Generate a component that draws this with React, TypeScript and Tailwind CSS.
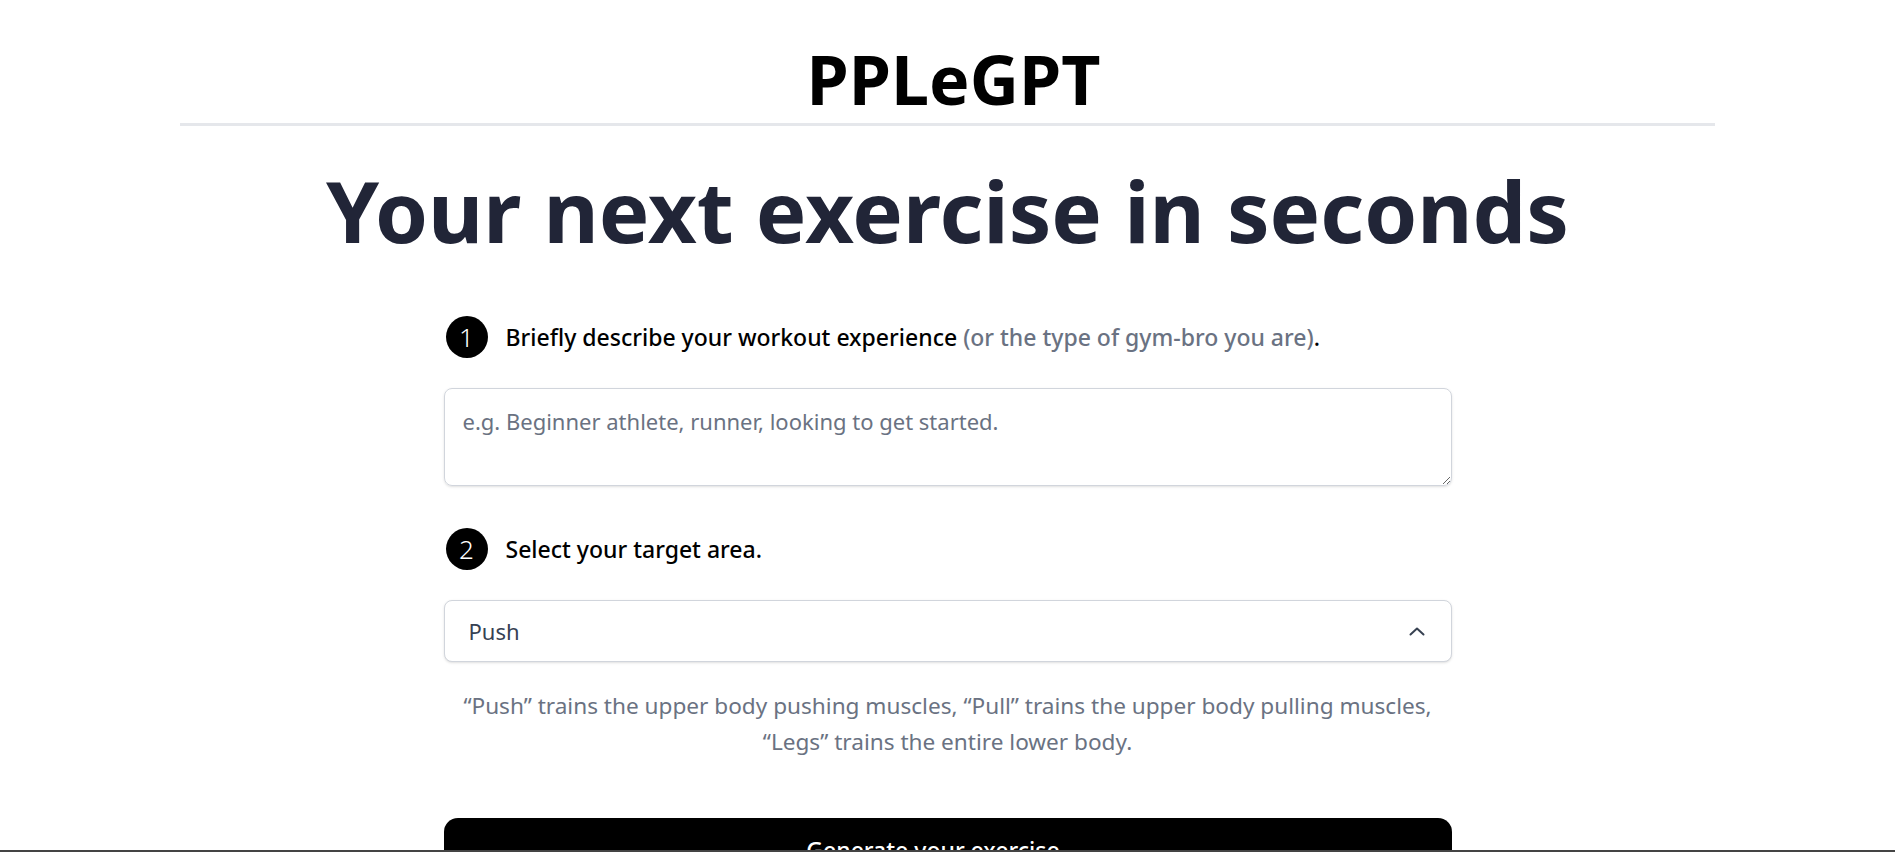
export default function App() {
  return (
    <div className="min-h-screen bg-white font-['Noto_Sans',sans-serif] flex flex-col items-center">
      <header className="w-[1535px] flex justify-center border-b-[3px] border-gray-200 pt-[45px] pb-[10px]">
        <h1 className="text-[68px] font-bold leading-none text-black pl-[12px]">PPLeGPT</h1>
      </header>

      <main className="flex flex-col items-center">
        <h2 className="mt-[42px] text-[85px] font-bold leading-none text-[#212537]">
          Your next exercise in seconds
        </h2>

        <div className="w-[1008px] mt-[63px] flex flex-col">
          {/* step 1 */}
          <div className="flex items-center gap-[18px] pl-[2px]">
            <div className="w-[42px] h-[42px] rounded-full bg-black text-white flex items-center justify-center text-[26px] leading-none font-light">
              1
            </div>
            <p className="text-[23px] font-medium text-black leading-none">
              Briefly describe your workout experience{" "}
              <span className="text-gray-500">(or the type of gym-bro you are)</span>.
            </p>
          </div>

          <textarea
            rows={2}
            placeholder="e.g. Beginner athlete, runner, looking to get started."
            className="mt-[30px] h-[98px] w-full rounded-lg border border-gray-300 shadow-sm px-[18px] py-[17px] text-[22px] leading-[30px] text-black placeholder:text-gray-500 outline-none"
          />

          {/* step 2 */}
          <div className="mt-[42px] flex items-center gap-[18px] pl-[2px]">
            <div className="w-[42px] h-[42px] rounded-full bg-black text-white flex items-center justify-center text-[26px] leading-none font-light">
              2
            </div>
            <p className="text-[23px] font-medium text-black leading-none">Select your target area.</p>
          </div>

          <button
            type="button"
            className="mt-[30px] h-[62px] w-full rounded-lg border border-gray-300 shadow-sm bg-white flex items-center justify-between pl-[24px] pr-[26px]"
          >
            <span className="text-[22px] text-gray-700 leading-none">Push</span>
            <svg width="16" height="9" viewBox="0 0 16 9" fill="none">
              <path d="M1.5 7.5 L8 1.5 L14.5 7.5" stroke="#374151" strokeWidth="2" strokeLinecap="round" strokeLinejoin="round" />
            </svg>
          </button>

          <p className="mt-[26px] text-center text-[22.6px] leading-[36px] text-gray-500">
            “Push” trains the upper body pushing muscles, “Pull” trains the upper body pulling muscles,
            <br />
            “Legs” trains the entire lower body.
          </p>

          <button
            type="button"
            className="mt-[58px] h-[64px] w-full rounded-[14px] bg-black text-white text-[23px] font-medium"
          >
            Generate your exercise →
          </button>
        </div>
      </main>

      <div className="fixed bottom-0 left-0 right-0 h-[2px] bg-[#444]" />
    </div>
  );
}
